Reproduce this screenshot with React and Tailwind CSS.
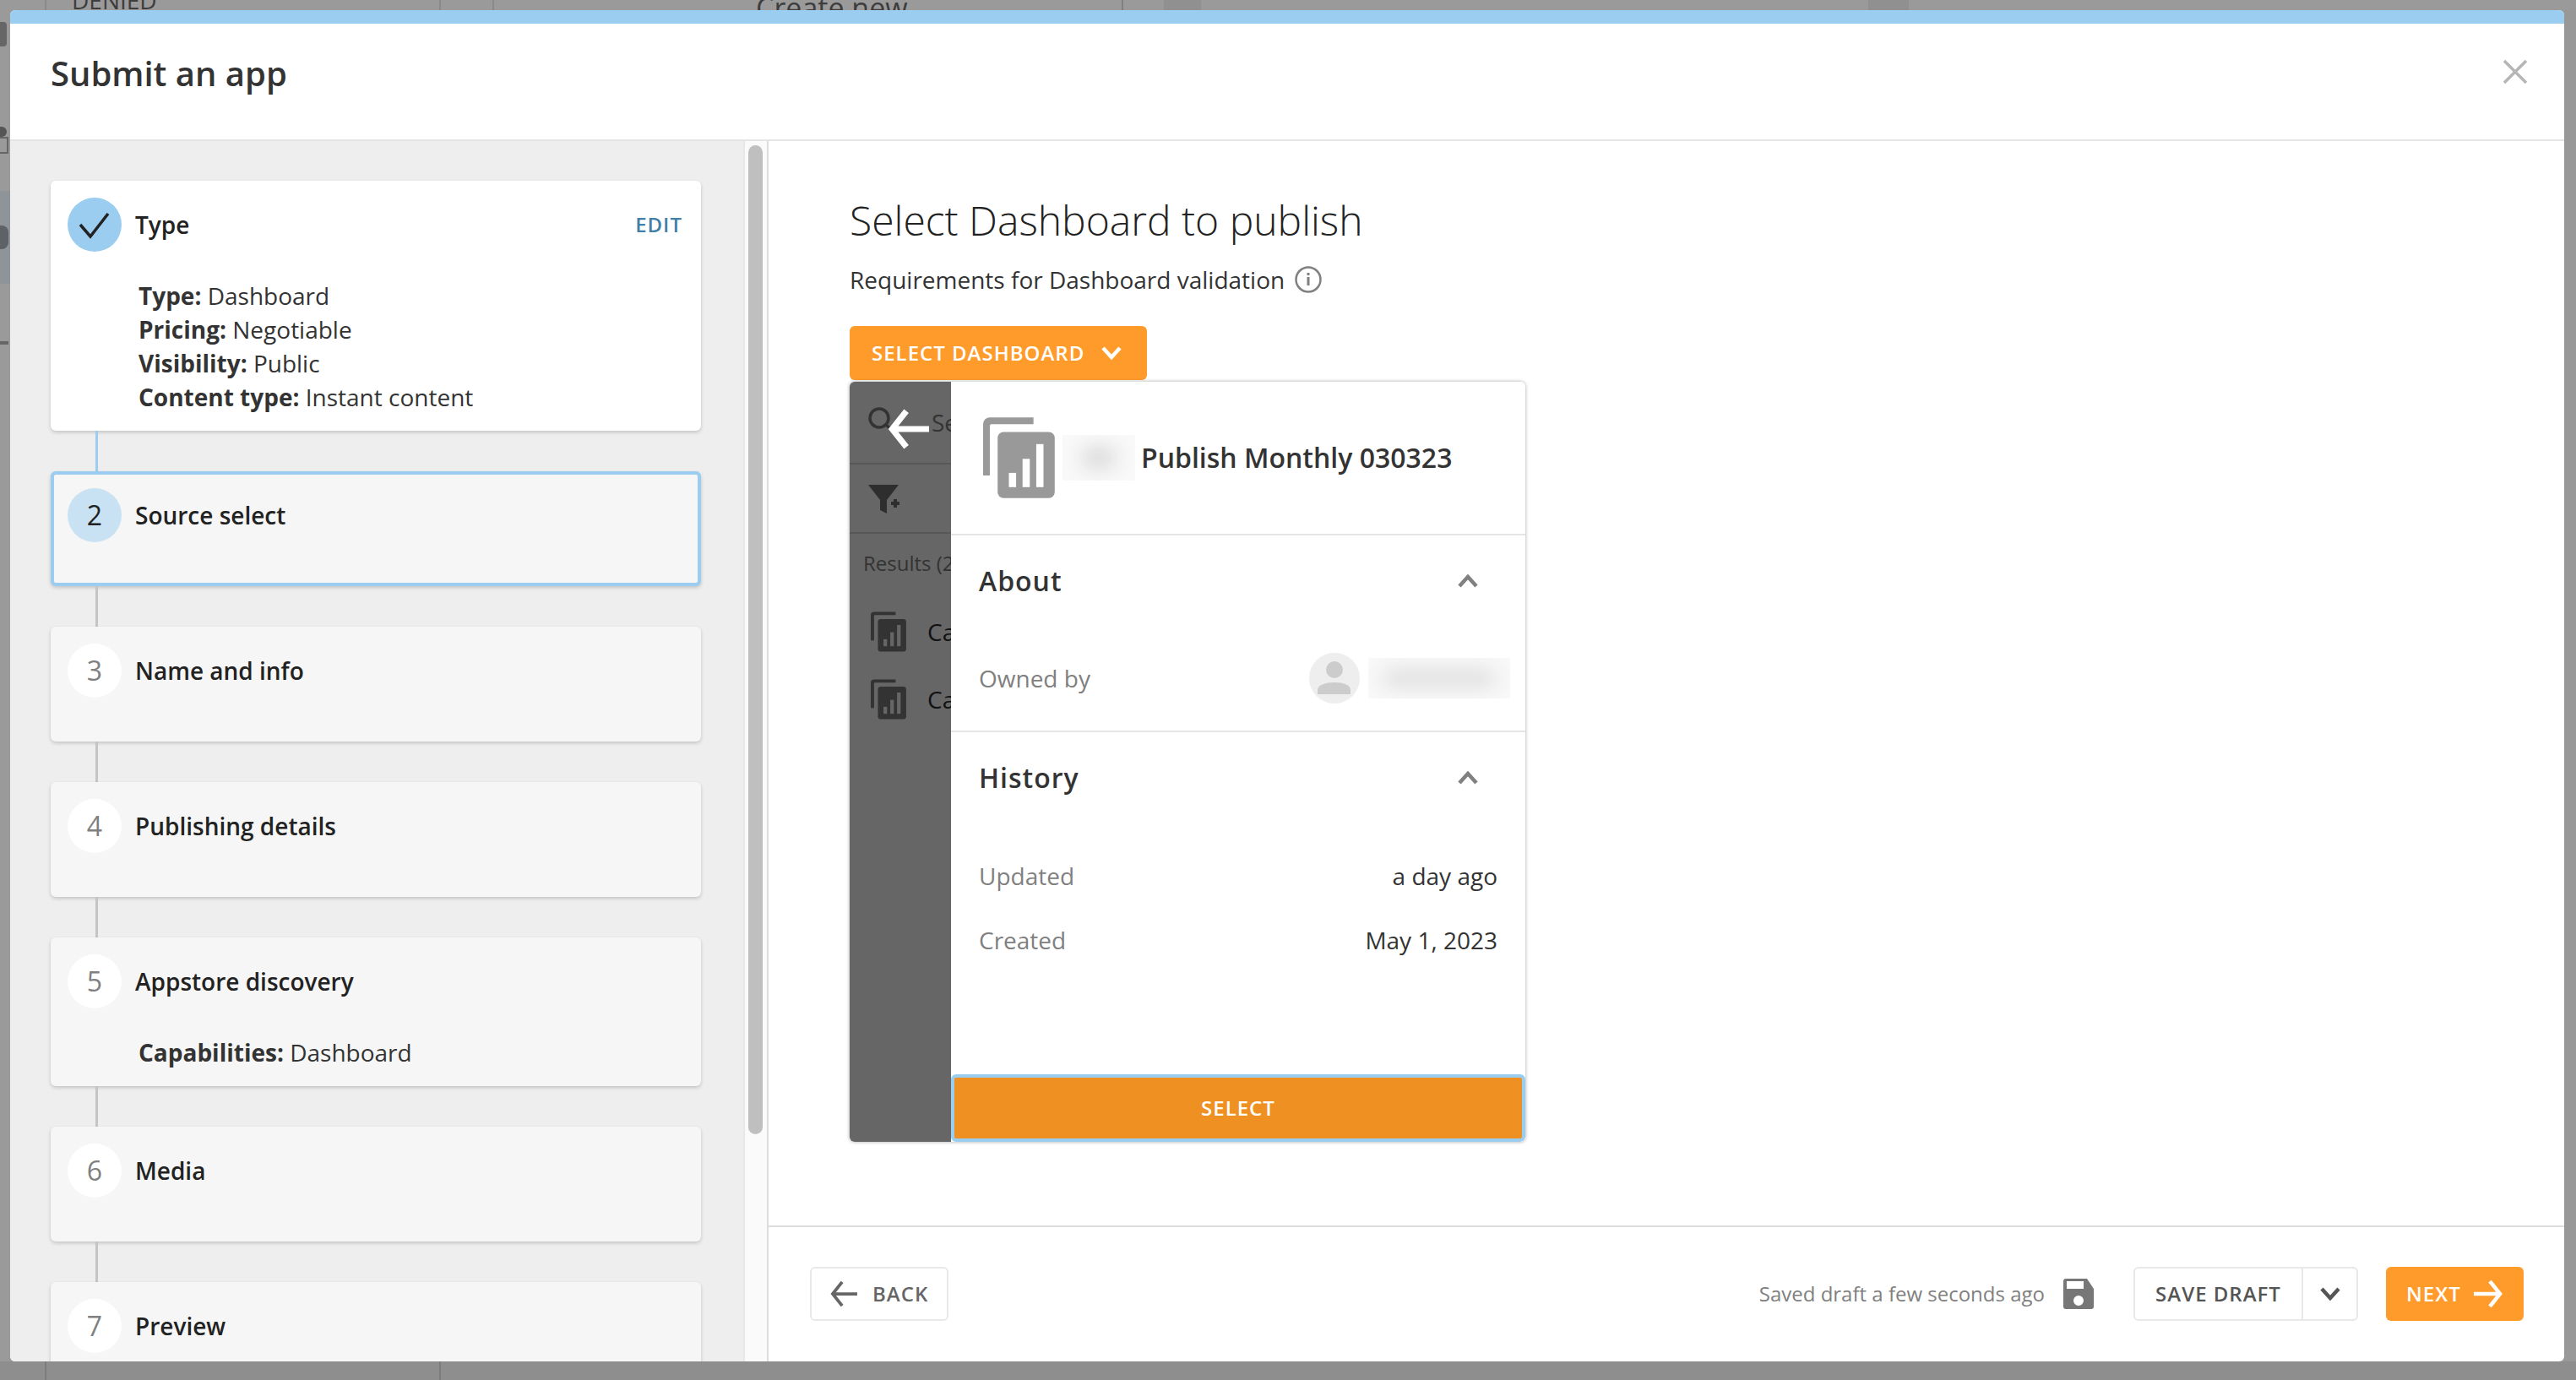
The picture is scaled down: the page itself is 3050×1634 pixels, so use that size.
import React from 'react';

const STEPS = [
  { n: 1, title: 'Type', done: true, h: 'h-[296px]', details: [['Type:', 'Dashboard'], ['Pricing:', 'Negotiable'], ['Visibility:', 'Public'], ['Content type:', 'Instant content']] },
  { n: 2, title: 'Source select', active: true, h: 'h-[136px]' },
  { n: 3, title: 'Name and info', h: 'h-[136px]' },
  { n: 4, title: 'Publishing details', h: 'h-[136px]' },
  { n: 5, title: 'Appstore discovery', h: 'h-[176px]', details: [['Capabilities:', 'Dashboard']] },
  { n: 6, title: 'Media', h: 'h-[136px]' },
  { n: 7, title: 'Preview', h: 'h-[136px]' },
];

const DocIcon = ({ className, back, front, bars }) => (
  <svg viewBox="0 0 85.5 96" className={className}>
    <path d="M0 69V8a8 8 0 0 1 8-8h52v8H10a2 2 0 0 0-2 2v59z" fill={back} />
    <rect x="17.3" y="17.3" width="68" height="78.7" rx="7" fill={front} />
    <rect x="30.7" y="66" width="8.6" height="17" fill={bars} />
    <rect x="47" y="49.3" width="8.6" height="33.7" fill={bars} />
    <rect x="63.3" y="31.7" width="8.6" height="51.3" fill={bars} />
  </svg>
);

const Chevron = ({ up, className, color = '#808080', width = 4.5 }) => (
  <svg viewBox="0 0 24 16" className={className} fill="none" stroke={color} strokeWidth={width}>
    <path d={up ? 'M2 14 12 3l10 11' : 'M2 2l10 11L22 2'} />
  </svg>
);

const Arrow = ({ left, className, color, width = 4 }) => (
  <svg viewBox="0 0 34 32" className={className} fill="none" stroke={color} strokeWidth={width}>
    {left ? <path d="M34 16H3M15 1 3 16l12 15" /> : <path d="M0 16h31M19 1l12 15-12 15" />}
  </svg>
);

const Step = ({ step }) => {
  let card = 'bg-[#f6f6f6]';
  let circle = 'bg-white text-[#808080]';
  if (step.done) {
    card = 'bg-white';
    circle = 'bg-[#9bcdf0]';
  }
  if (step.active) {
    card = 'bg-[#f6f6f6] border-4 border-[#9bcdf0]';
    circle = 'bg-[#c9e2f3] text-[#222]';
  }
  return (
    <div className={`${step.h} ${card} w-[770px] shrink-0 rounded-md shadow-[0_2px_4px_rgba(0,0,0,0.18)] ${step.active ? 'px-4 pt-4' : 'px-5 pt-5'}`}>
      <div className="flex items-center h-16">
        <div className={`w-16 h-16 rounded-full flex items-center justify-center text-[32px] ${circle}`}>
          {step.done ? (
            <svg viewBox="0 0 64 64" className="w-16 h-16" fill="none" stroke="#222" strokeWidth="3.5">
              <path d="M15 32l12 14 21-27" />
            </svg>
          ) : step.n}
        </div>
        <span className="ml-4 text-[28px] font-semibold text-[#222]">{step.title}</span>
        {step.done && <span className="ml-auto mr-[2px] text-[24px] font-semibold tracking-[1px] text-[#3f7fa8]">EDIT</span>}
      </div>
      {step.details && (
        <div className="mt-8 ml-[84px] text-[28px] leading-10 text-[#333]">
          {step.details.map(([k, v]) => (
            <div key={k}><b className="font-bold">{k}</b> {v}</div>
          ))}
        </div>
      )}
    </div>
  );
};

const Blur = ({ className, inner }) => (
  <div className={`bg-[#f9f9f9] overflow-hidden flex items-center justify-center ${className}`}>
    <div className={`blur-md ${inner}`} />
  </div>
);

const Backdrop = {
  Top: () => (
    <div className="h-3 shrink-0 flex overflow-hidden bg-[#9a9a9a] text-[#3d3d3d]">
      <div className="w-[53px] h-full" />
      <div className="w-[467px] border-l-2 border-[#8a8a8a] pl-[30px] text-[28px] leading-none -mt-[14px]">DENIED</div>
      <div className="w-[63px] border-l-2 border-[#8a8a8a]" />
      <div className="w-[745px] border-l-2 border-[#8a8a8a] pl-[310px] text-[34px] leading-none -mt-[8px] whitespace-nowrap">Create new</div>
      <div className="w-[50px] border-l-2 border-dashed border-[#808080]" />
      <div className="w-[44px] bg-[#909090]" />
      <div className="w-[790px]" />
      <div className="w-[48px] bg-[#909090]" />
    </div>
  ),
  Left: () => (
    <div className="w-3 shrink-0 flex flex-col bg-[#9a9a9a]">
      <div className="mt-[14px] h-[29px] w-2 rounded-r bg-[#666]" />
      <div className="mt-[95px] h-3 w-2 rounded-r-full bg-[#555]" />
      <div className="h-5 w-[10px] border-2 border-l-0 border-[#666]" />
      <div className="mt-[44px] h-[110px] bg-[#8f9499] flex items-center">
        <div className="h-7 w-[10px] rounded-r-lg bg-[#5e6266]" />
      </div>
      <div className="mt-[68px] h-1 w-[10px] bg-[#666]" />
    </div>
  ),
  Bottom: () => (
    <div className="h-[22px] shrink-0 flex bg-[#8e8e8e]">
      <div className="w-[53px]" />
      <div className="w-[467px] border-l-2 border-[#7c7c7c]" />
      <div className="border-l-2 border-[#7c7c7c]" />
    </div>
  ),
};

const DetailRow = ({ label, value }) => (
  <div className="flex justify-between text-[28px] leading-10 pl-[33px] pr-[33px]">
    <span className="text-[#808080]">{label}</span>
    <span className="text-[#333]">{value}</span>
  </div>
);

const SectionHead = ({ children, className }) => (
  <div className={`flex items-center justify-between pl-[33px] pr-[56px] ${className}`}>
    <span className="text-[32px] font-semibold tracking-[1px] text-[#333]">{children}</span>
    <Chevron up className="w-6 h-4" />
  </div>
);

const DashboardPicker = () => (
  <div className="relative mt-[2px] flex w-[800px] h-[900px] rounded-md overflow-hidden shadow-[0_0_4px_rgba(0,0,0,0.35)]">
    <div className="w-[120px] shrink-0 bg-[#666] overflow-hidden whitespace-nowrap text-[#333]">
      <div className="h-[98px] border-b-2 border-[#575757] flex items-start pt-[30px] pl-[22px]">
        <svg viewBox="0 0 30 28" className="w-[30px] h-7 shrink-0" fill="none" stroke="#333" strokeWidth="3.5">
          <circle cx="13" cy="13" r="11" />
          <path d="M21 21l7 6" />
        </svg>
        <span className="ml-[45px] -mt-[3px] text-[28px]">Search</span>
      </div>
      <div className="h-[82px] border-b-2 border-[#575757] pl-[22px] pt-6">
        <svg viewBox="0 0 38 34" className="w-[38px] h-[34px]" fill="#2e2e2e">
          <path d="M0 0h36L22 18v16l-8-4V18z" />
          <path d="M30 17h4v3h3v4h-3v3h-4v-3h-3v-4h3z" />
        </svg>
      </div>
      <div className="pl-4 mt-[19px] text-[24px] leading-8">Results (2)</div>
      <div className="pl-[25px] mt-[41px] flex items-center h-12">
        <DocIcon className="w-[42px] h-12 shrink-0" back="#333" front="#333" bars="#666" />
        <span className="ml-[25px] text-[28px] text-[#111]">Campaign</span>
      </div>
      <div className="pl-[25px] mt-8 flex items-center h-12">
        <DocIcon className="w-[42px] h-12 shrink-0" back="#333" front="#333" bars="#666" />
        <span className="ml-[25px] text-[28px] text-[#111]">Campaign</span>
      </div>
    </div>
    <div className="flex-1 flex flex-col bg-white">
      <div className="h-[182px] border-b-2 border-[#e5e5e5] flex items-center pl-[38px]">
        <DocIcon className="w-[85px] h-24 shrink-0" back="#999" front="#999" bars="#fff" />
        <Blur className="ml-[9px] w-[86px] h-[54px]" inner="w-10 h-5 rounded-full bg-[#cfcfcf]" />
        <span className="ml-[7px] text-[32px] font-semibold text-[#333]">Publish Monthly 030323</span>
      </div>
      <SectionHead className="h-[107px]">About</SectionHead>
      <div className="h-[126px] border-b-2 border-[#e5e5e5] flex items-center justify-between pl-[33px] pr-[18px]">
        <span className="text-[28px] text-[#808080]">Owned by</span>
        <div className="flex items-center gap-[10px]">
          <svg viewBox="0 0 60 60" className="w-[60px] h-[60px]">
            <circle cx="30" cy="30" r="30" fill="#eee" />
            <circle cx="30" cy="20" r="10" fill="#ccc" />
            <path d="M10 49v-5c0-6 10-9 20-9s19 3 19 9v5z" fill="#ccc" />
          </svg>
          <Blur className="w-[168px] h-12" inner="w-[136px] h-5 rounded-full bg-[#dcdcdc]" />
        </div>
      </div>
      <SectionHead className="h-[108px]">History</SectionHead>
      <div className="mt-[42px]"><DetailRow label="Updated" value="a day ago" /></div>
      <div className="mt-9"><DetailRow label="Created" value="May 1, 2023" /></div>
      <button className="mt-auto h-20 bg-[#ef9122] border-4 border-[#9bcdf0] rounded-md text-white text-[24px] font-semibold tracking-[1px]">SELECT</button>
    </div>
    <Arrow left color="#fff" width={5} className="absolute left-[46px] top-8 w-12 h-12" />
  </div>
);

const Footer = () => (
  <div className="h-[161px] shrink-0 border-t-2 border-[#ddd] flex items-start pt-[47px] pl-[49px] pr-12 text-[24px]">
    <button className="w-[164px] h-16 rounded-md border-2 border-[#e8e8e8] flex items-center pl-[22px] font-semibold tracking-[1px] text-[#666]">
      <Arrow left color="#666" className="w-8 h-[30px]" />
      <span className="ml-[18px]">BACK</span>
    </button>
    <span className="ml-auto h-16 flex items-center text-[#808080]">Saved draft a few seconds ago</span>
    <div className="h-16 flex items-center ml-[22px]">
      <svg viewBox="0 0 36 36" className="w-9 h-9">
        <path fill="#777" fillRule="evenodd" d="M3 0h25l8 12v21a3 3 0 0 1-3 3H3a3 3 0 0 1-3-3V3a3 3 0 0 1 3-3zM4 3v9h20V3zM18 20a6 6 0 1 0 0 12 6 6 0 0 0 0-12z" />
      </svg>
    </div>
    <div className="ml-[47px] w-[266px] h-16 rounded-md border-2 border-[#e8e8e8] flex items-center font-semibold tracking-[1px] text-[#555]">
      <span className="w-[197px] text-center">SAVE DRAFT</span>
      <div className="h-full border-l-2 border-[#e8e8e8] flex-1 flex items-center justify-center">
        <Chevron color="#555" className="w-6 h-4" />
      </div>
    </div>
    <button className="ml-[33px] w-[163px] h-16 rounded-md bg-[#ff9b2b] flex items-center pl-6 font-semibold tracking-[1px] text-white">
      <span>NEXT</span>
      <Arrow color="#fff" width={4.5} className="ml-[15px] w-[34px] h-[32px]" />
    </button>
  </div>
);

const App = () => (
  <div className="w-screen h-screen overflow-hidden flex flex-col bg-[#9a9a9a] font-['Open_Sans',sans-serif]">
    <Backdrop.Top />
    <div className="flex-1 min-h-0 flex">
      <Backdrop.Left />
      <div className="w-[3024px] shrink-0 flex flex-col overflow-hidden rounded-md bg-white">
        <div className="h-4 shrink-0 bg-[#9bcdf0]" />
        <div className="h-[139px] shrink-0 border-b-2 border-[#e5e5e5] flex items-center justify-between pl-12 pr-11 pb-5">
          <h1 className="text-[40px] font-semibold text-[#333]">Submit an app</h1>
          <svg viewBox="0 0 28 28" className="w-7 h-7 -mt-1" fill="none" stroke="#b5b5b5" strokeWidth="3.5">
            <path d="M1 1l26 26M27 1 1 27" />
          </svg>
        </div>
        <div className="flex-1 min-h-0 flex">
          <div className="w-[868px] shrink-0 bg-[#eee] overflow-hidden pl-12 pt-[47px] flex flex-col">
            {STEPS.map((s, i) => (
              <React.Fragment key={s.n}>
                {i > 0 && <div className={`h-12 w-[3px] shrink-0 ml-[53px] ${i === 1 ? 'bg-[#9bcdf0]' : 'bg-[#c4c4c4]'}`} />}
                <Step step={s} />
              </React.Fragment>
            ))}
          </div>
          <div className="w-7 shrink-0 bg-[#fafafa] border-l-2 border-[#e8e8e8] pl-1 pt-[5px]">
            <div className="h-[1171px] w-[17px] rounded-full bg-[#bfbfbf]" />
          </div>
          <div className="flex-1 min-w-0 flex flex-col border-l-2 border-[#ddd]">
            <div className="flex-1 min-h-0 pl-24 pt-16">
              <h2 className="text-[48px] leading-[60px] font-light text-[#222]">Select Dashboard to publish</h2>
              <div className="mt-5 flex items-center text-[28px] leading-10 text-[#333]">
                Requirements for Dashboard validation
                <svg viewBox="0 0 32 32" className="ml-3 w-8 h-8" fill="none" stroke="#808080">
                  <circle cx="16" cy="16" r="14.5" strokeWidth="2.5" />
                  <path d="M16 13v10" strokeWidth="3" />
                  <path d="M16 8v3" strokeWidth="3" />
                </svg>
              </div>
              <button className="mt-[35px] w-[352px] h-16 rounded-md bg-[#ff9b2b] flex items-center pl-[26px] text-white text-[24px] font-semibold tracking-[1px]">
                SELECT DASHBOARD
                <Chevron color="#fff" className="ml-5 w-6 h-4" />
              </button>
              <DashboardPicker />
            </div>
            <Footer />
          </div>
        </div>
      </div>
      <div className="flex-1 bg-[#989898]" />
    </div>
    <Backdrop.Bottom />
  </div>
);

export default App;
